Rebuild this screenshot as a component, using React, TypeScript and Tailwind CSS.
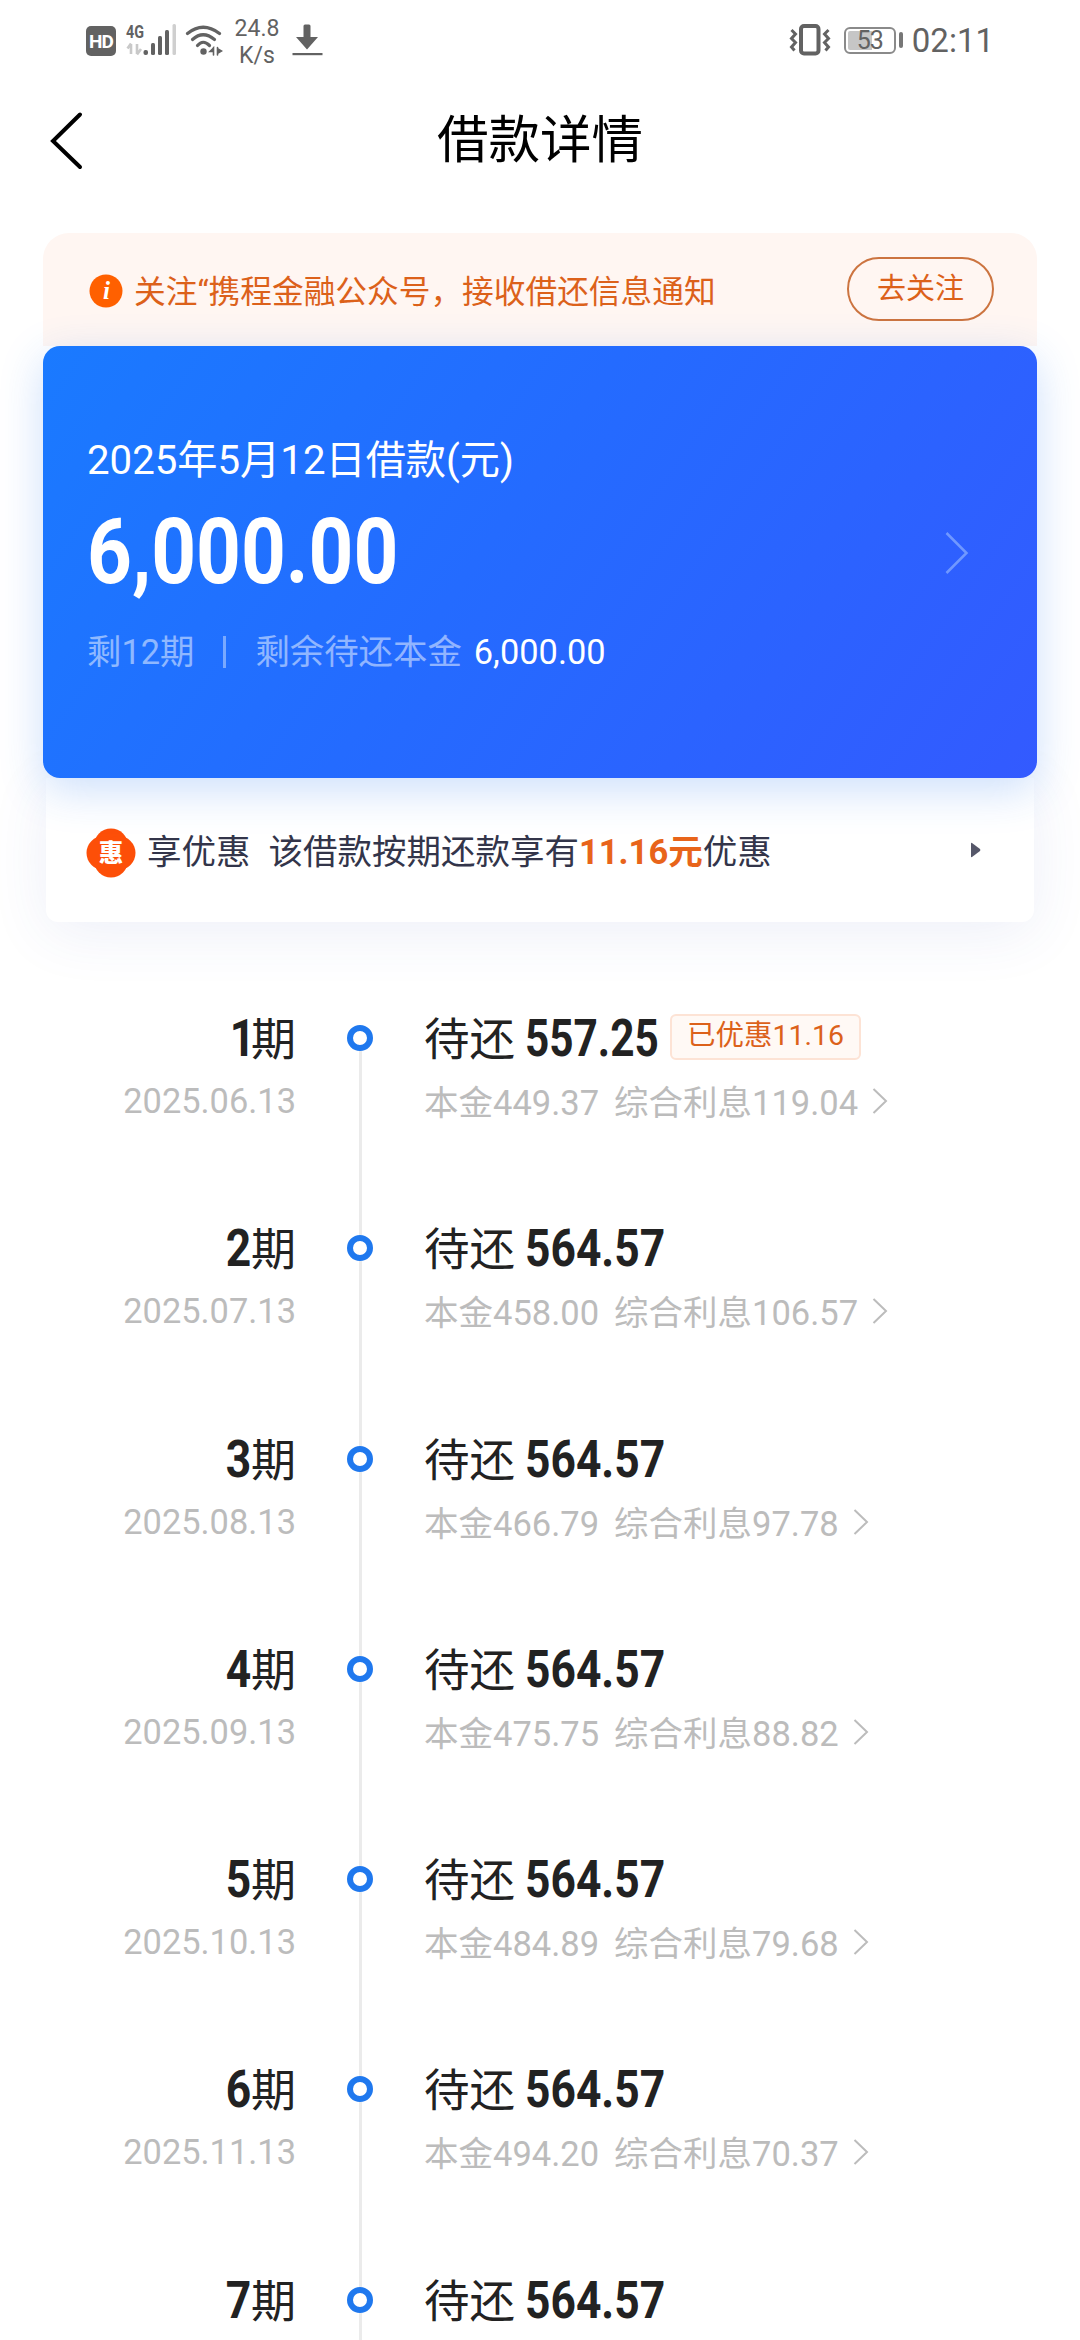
type Period = {
    no: number
    amount: string
    date?: string
    principal?: string
    interest?: string
    discount?: string
}

const periods: Period[] = [
    { no: 1, date: "2025.06.13", amount: "557.25", principal: "449.37", interest: "119.04", discount: "11.16" },
    { no: 2, date: "2025.07.13", amount: "564.57", principal: "458.00", interest: "106.57" },
    { no: 3, date: "2025.08.13", amount: "564.57", principal: "466.79", interest: "97.78" },
    { no: 4, date: "2025.09.13", amount: "564.57", principal: "475.75", interest: "88.82" },
    { no: 5, date: "2025.10.13", amount: "564.57", principal: "484.89", interest: "79.68" },
    { no: 6, date: "2025.11.13", amount: "564.57", principal: "494.20", interest: "70.37" },
    { no: 7, amount: "564.57" },
]

const StatusBar = () => {
    return <div className="flex h-20 items-center justify-between pl-[86px] pr-[86px] text-[#626262]">
        <div className="flex items-center">
            <div className="mt-0.5 flex h-[30px] w-[30px] items-center justify-center rounded-[5px] bg-[#626262] text-[19px] leading-none font-bold tracking-[-1px] text-white">HD</div>
            <svg className="ml-2.5 h-8 w-[52px] overflow-visible" viewBox="0 0 52 32">
                <text x="0" y="14" fontSize="18.5" fontWeight="700" fill="#626262" textLength="18" lengthAdjust="spacingAndGlyphs">4G</text>
                <path d="M5 20v10M5 19.500l-3.500 5M11 20v10M11 30.500l4-5.500" stroke="#c9c9c9" strokeWidth="2.600" fill="none" />
                <rect x="17.500" y="26" width="4.500" height="5" rx="2" fill="#626262" />
                <rect x="25" y="19" width="4" height="12" rx="1.500" fill="#626262" />
                <rect x="32" y="12" width="4" height="19" rx="1.500" fill="#626262" />
                <rect x="39" y="6" width="4" height="25" rx="1.500" fill="#626262" />
                <rect x="46.500" y="0" width="3.500" height="31" rx="1.500" fill="#cfcfcf" />
            </svg>
            <svg className="ml-[7px] h-8 w-[38px]" viewBox="0 0 38 32" fill="none" stroke="#626262" strokeLinecap="round">
                <path d="M2.500 9.500Q18 -3 34.500 9.500" strokeWidth="3.200" />
                <path d="M7.500 15.500Q18 6 29.500 15.500" strokeWidth="3.200" />
                <path d="M12.500 21.500Q18 15 24.500 21.500" strokeWidth="3.200" />
                <circle cx="18.500" cy="27.500" r="3.200" fill="#626262" stroke="none" />
                <path d="M28.500 23.500v7.500M28.500 24l-3.500 3.500h3.500zM32.500 23.500v7.500M33 25l3.500 2-3.500 2z" fill="#626262" strokeWidth="1.600" />
            </svg>
            <div className="ml-[11px] w-[46px] pt-[3px] text-center text-[23px] leading-[27px]">
                <div>24.8</div>
                <div>K/s</div>
            </div>
            <svg className="ml-[12px] h-8 w-[31px]" viewBox="0 0 31 32" fill="#626262">
                <path d="M11.500 2q0-1.500 1.500-1.500h4q1.500 0 1.500 1.500v11h7.500L15 25.500 4 13h7.500z" />
                <rect x="0.500" y="29" width="30" height="2.200" />
            </svg>
        </div>
        <div className="flex items-center">
            <svg className="h-8 w-[42px]" viewBox="0 0 42 32" fill="none" stroke="#626262" strokeWidth="3">
                <rect x="12" y="2" width="17.500" height="27.500" rx="3" strokeWidth="4" />
                <path d="M2.500 6l4 4-4 4.500 4 4-4 4.500 3 3.500M39.500 6l-4 4 4 4.500-4 4 4 4.500-3 3.500" />
            </svg>
            <div className="ml-[13px] flex h-[27px] w-[52px] items-center justify-center rounded-[6px] border-2 border-[#8a8a8a] bg-[linear-gradient(90deg,#c6c6c6_54%,transparent_54%)] bg-clip-content p-0.5 text-[25px] leading-none tracking-[-1px]">53</div>
            <div className="ml-[3px] h-4 w-1 rounded-sm bg-[#777]" />
            <div className="ml-[9px] pt-0.5 text-[33px] leading-10">02:11</div>
        </div>
    </div>
}

const Header = () => {
    return <div className="flex h-[153px] items-start pl-12">
        <svg className="mt-[30px] h-[60px] w-9" viewBox="0 0 36 60" fill="none" stroke="#000" strokeWidth="4" strokeLinecap="round">
            <path d="M32 4.500L5 31l27 26" />
        </svg>
        <div className="mr-[84px] flex-1 pt-[27px] text-center text-[51.5px] leading-[68px] text-black">借款详情</div>
    </div>
}

const Notice = () => {
    return <div className="flex h-[113px] items-start rounded-t-[26px] bg-[#fff6f2] pr-[43px] pl-[46px] text-[#dc611a]">
        <svg className="mt-[41px] h-[34px] w-[34px]" viewBox="0 0 34 34">
            <circle cx="17" cy="17" r="16.500" fill="#ff6000" />
            <text x="17.500" y="25" fontSize="25" fontStyle="italic" fontWeight="700" textAnchor="middle" fill="#fff" className="font-['Liberation_Serif',serif]">i</text>
        </svg>
        <div className="ml-[11px] flex-1 pt-[39px] text-[31.7px] leading-[42px] whitespace-nowrap">关注“携程金融公众号，接收借还信息通知</div>
        <div className="mt-6 flex h-16 w-[147px] justify-center rounded-full border-2 border-[#cc7440] text-[29px] leading-[60px]">去关注</div>
    </div>
}

const LoanCard = () => {
    return <div className="relative z-10 flex h-[432px] items-start justify-between rounded-[17px] bg-[linear-gradient(125deg,#1a7aff_0%,#246bff_45%,#335aff_100%)] pr-[68px] pl-11 text-white shadow-[0_12px_44px_rgba(40,120,240,0.24)]">
        <div>
            <div className="mt-[85px] text-[40.2px] leading-[60px]">2025年5月12日借款(元)</div>
            <div className="mt-[11px] w-[312px] origin-left scale-x-[0.86] text-[91px] leading-[100px] font-bold whitespace-nowrap">6,000.00</div>
            <div className="mt-[25px] flex items-center text-[34.4px] leading-[50px]">
                <span className="text-white/50">剩12期</span>
                <span className="ml-[29px] h-8 w-[3px] bg-white/40" />
                <span className="ml-[29px] text-white/50">剩余待还本金</span>
                <span className="ml-3">6,000.00</span>
            </div>
        </div>
        <svg className="mt-[185px] h-11 w-6" viewBox="0 0 24 44" fill="none" stroke="#7098ff" strokeWidth="2.500">
            <path d="M1.500 2l20 20-20 20" />
        </svg>
    </div>
}

const Discount = () => {
    return <div className="mx-[3px] flex h-[144px] items-start rounded-b-xl bg-white pr-[53px] pl-10 text-[#33354a] shadow-[0_10px_60px_rgba(60,80,180,0.09)]">
        <svg className="mt-[50px] h-[50px] w-[50px]" viewBox="0 0 50 50">
            <g fill="#fd4f08">
                <circle cx="25" cy="17.500" r="17" />
                <circle cx="25" cy="32.500" r="17" />
                <circle cx="17.500" cy="25" r="17" />
                <circle cx="32.500" cy="25" r="17" />
            </g>
            <text x="25" y="34" fontSize="24.5" fontWeight="900" textAnchor="middle" fill="#fff">惠</text>
        </svg>
        <div className="ml-[11px] flex pt-[49px] text-[34.5px] leading-[50px]">
            <span>享优惠</span>
            <span className="ml-[18px]">该借款按期还款享有</span>
            <b className="text-[#e8641a]">11.16元</b>
            <span>优惠</span>
        </div>
        <svg className="mt-[64px] ml-auto h-4 w-2.5" viewBox="0 0 10 16" fill="#555769">
            <path d="M0 1.500Q0 .5 1 1l8 6q.8 1 0 2l-8 6q-1 .500-1-.500z" />
        </svg>
    </div>
}

const Row = ({ p }: { p: Period }) => {
    return <div className="flex h-[210.3px] items-start">
        <div className="-mt-px w-[296px] text-right">
            <div className="flex items-baseline justify-end text-[45px] leading-[60px] text-[#222]">
                <span className={p.no === 1
                    ? "-mr-1 origin-right scale-x-[0.87] text-[51px] leading-[60px] font-bold"
                    : "origin-right scale-x-[0.87] text-[51px] leading-[60px] font-bold"}>{p.no}</span>
                <span>期</span>
            </div>
            {p.date && <div className="mt-[5px] text-[34.4px] leading-[50px] text-[#bcbcbc]">{p.date}</div>}
        </div>
        <div className="ml-[51px] flex w-[26px] flex-col items-center self-stretch">
            {/* line segment above the dot, hidden on the first row */}
            <div className={p.no === 1 ? "h-[15px] w-[3px]" : "h-[15px] w-[3px] bg-[#ebebeb]"} />
            <div className="h-[26px] w-[26px] rounded-full border-[6px] border-[#1f78ee] bg-white" />
            <div className="w-[3px] flex-1 bg-[#ebebeb]" />
        </div>
        <div className="-mt-px ml-[51px]">
            <div className="flex h-[60px] items-baseline text-[45.5px] leading-[60px] text-[#222]">
                <span>待还</span>
                <span className={p.discount
                    ? "ml-2.5 w-[134px] origin-left scale-x-[0.83] text-[51px] leading-[60px] font-bold"
                    : "ml-2.5 w-[140px] origin-left scale-x-[0.87] text-[51px] leading-[60px] font-bold"}>{p.amount}</span>
                {p.discount && <span className="mt-[5px] ml-[11px] h-[46px] self-start rounded-md border-2 border-[#fde3d5] bg-[#fff9f5] px-[15px] text-[28.5px] leading-[40px] text-[#dc611a]">已优惠{p.discount}</span>}
            </div>
            {p.principal && <div className="mt-[9px] flex items-center text-[34.5px] leading-[50px] text-[#bcbcbc]">
                <span>本金{p.principal}</span>
                <span className="ml-[15px]">综合利息{p.interest}</span>
                <svg className="-mt-1 ml-[14px] h-[26px] w-4" viewBox="0 0 16 26" fill="none" stroke="#bcbcbc" strokeWidth="2">
                    <path d="M1.500 1l12.500 12L1.500 25" />
                </svg>
            </div>}
        </div>
    </div>
}

export default function App() {
    return <div className="h-[2340px] w-[1080px] overflow-hidden bg-white font-[Roboto,'Noto_Sans_CJK_SC',sans-serif]">
        <StatusBar />
        <Header />
        <div className="mx-[43px]">
            <Notice />
            <LoanCard />
            <Discount />
        </div>
        <div className="mt-[88px]">
            {periods.map(p => <Row key={p.no} p={p} />)}
        </div>
    </div>
}
